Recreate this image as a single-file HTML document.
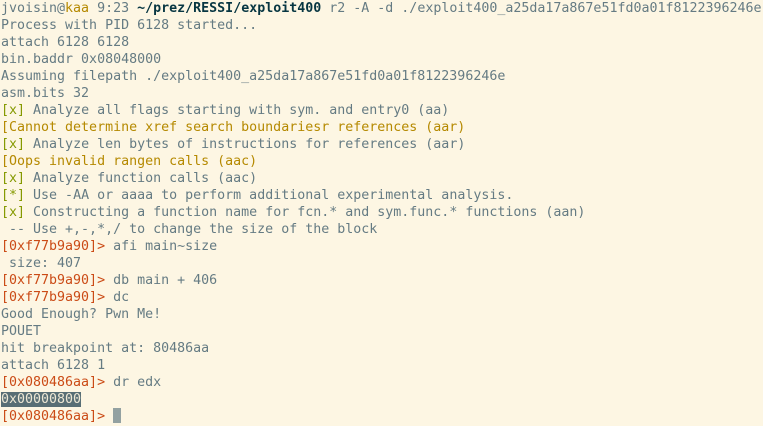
<!DOCTYPE html>
<html><head><meta charset="utf-8"><style>
html,body{margin:0;padding:0;background:#fdf6e3;width:763px;height:426px;overflow:hidden}
pre{margin:0;padding:0 0 0 1px;font-family:"DejaVu Sans Mono","Liberation Mono",monospace;font-size:13.3px;line-height:17px;color:#657b83;white-space:pre}
.g{color:#859900}.y{color:#b58900}.o{color:#cb4b16}.b{color:#073642;font-weight:bold}
.h{background:#586e75;color:#eee8d5}
.c{display:inline-block;width:8px;height:15px;background:#93a1a1;vertical-align:-3px}
</style></head><body><pre>jvoisin@<span class="y">kaa</span> 9:23 <span class="b">~/prez/RESSI/exploit400</span> r2 -A -d ./exploit400_a25da17a867e51fd0a01f8122396246e
Process with PID 6128 started...
attach 6128 6128
bin.baddr 0x08048000
Assuming filepath ./exploit400_a25da17a867e51fd0a01f8122396246e
asm.bits 32
<span class="g">[x]</span> Analyze all flags starting with sym. and entry0 (aa)
<span class="y">[Cannot determine xref search boundariesr references (aar)</span>
<span class="g">[x]</span> Analyze len bytes of instructions for references (aar)
<span class="y">[Oops invalid rangen calls (aac)</span>
<span class="g">[x]</span> Analyze function calls (aac)
<span class="g">[*]</span> Use -AA or aaaa to perform additional experimental analysis.
<span class="g">[x]</span> Constructing a function name for fcn.* and sym.func.* functions (aan)
 -- Use +,-,*,/ to change the size of the block
<span class="o">[0xf77b9a90]&gt;</span> afi main~size
 size: 407
<span class="o">[0xf77b9a90]&gt;</span> db main + 406
<span class="o">[0xf77b9a90]&gt;</span> dc
Good Enough? Pwn Me!
POUET
hit breakpoint at: 80486aa
attach 6128 1
<span class="o">[0x080486aa]&gt;</span> dr edx
<span class="h">0x00000800</span>
<span class="o">[0x080486aa]&gt;</span> <span class="c"></span></pre></body></html>
